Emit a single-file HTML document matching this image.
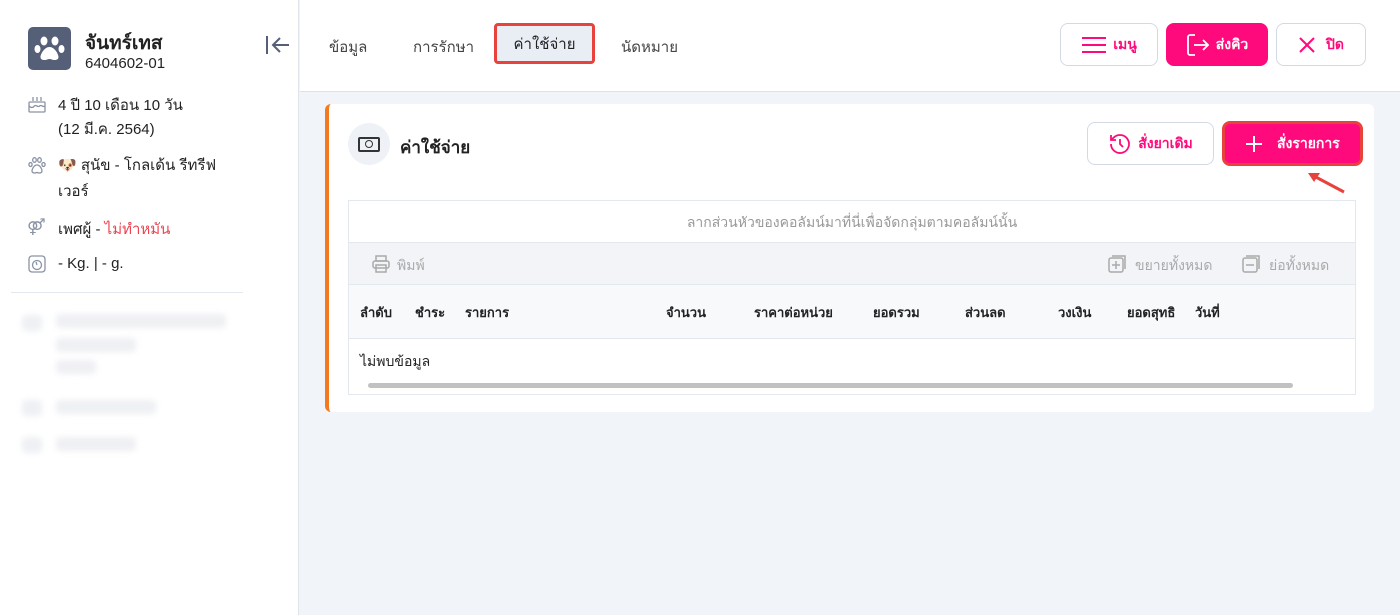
<!DOCTYPE html>
<html><head><meta charset="utf-8"><style>
*{box-sizing:border-box;margin:0;padding:0}
body{width:1400px;height:615px;font-family:"Liberation Sans","DejaVu Sans",sans-serif;background:#f1f4f8;position:relative;overflow:hidden;color:#222;font-size:14px}
.side{position:absolute;left:0;top:0;width:299px;height:615px;background:#fff;border-right:1px solid #dfe3ea}
.abs{position:absolute}
.top{position:absolute;left:300px;top:0;width:1100px;height:92px;background:#fff;border-bottom:1px solid #dde2ea}
.btn{position:absolute;border:1px solid #d3dae3;border-radius:8px;background:#fff;color:#ff0a7c;font-weight:bold;display:flex;align-items:center;justify-content:center;gap:6px;font-size:14px}
.pink{background:#ff0a7c;color:#fff;border-color:#ff0a7c}
.blur{position:absolute;background:#eef0f3;border-radius:4px;filter:blur(3px)}
</style></head><body>
<div class="side">
  <div class="abs" style="left:28px;top:27px;width:43px;height:43px;background:#555f77;border-radius:5px">
    <svg width="43" height="43" viewBox="0 0 43 43"><g fill="#fff"><ellipse cx="16" cy="14" rx="3.5" ry="4.5"/><ellipse cx="27" cy="14" rx="3.5" ry="4.5"/><ellipse cx="9.5" cy="22" rx="3" ry="4"/><ellipse cx="33.5" cy="22" rx="3" ry="4"/><path d="M21.5 20c-5 0-9 7-9 10s3 3 4.5 3 3-1 4.5-1 3 1 4.5 1 4.5 0 4.5-3-4-10-9-10z"/></g></svg>
  </div>
  <div class="abs" style="left:85px;top:28px;font-size:19px;font-weight:bold">จันทร์เทส</div>
  <div class="abs" style="left:85px;top:55px;font-size:15px">6404602-01</div>
  <svg class="abs" style="left:264px;top:34px" width="26" height="22" viewBox="0 0 26 22"><g stroke="#555f77" stroke-width="2" fill="none"><line x1="3" y1="2" x2="3" y2="20"/><line x1="9" y1="11" x2="25" y2="11"/><path d="M16 4l-7 7 7 7"/></g></svg>
  <svg class="abs" style="left:27px;top:94px" width="20" height="20" viewBox="0 0 20 20"><g stroke="#8a93a5" stroke-width="1.3" fill="none"><rect x="2" y="8" width="16" height="10" rx="1"/><path d="M2 12c2 2 4 2 5.3 0s4 2 5.3 0 4 2 5.4 0"/><line x1="6" y1="3" x2="6" y2="7"/><line x1="10" y1="3" x2="10" y2="7"/><line x1="14" y1="3" x2="14" y2="7"/></g></svg>
  <div class="abs" style="left:58px;top:94px;font-size:15px;line-height:24px">4 ปี 10 เดือน 10 วัน<br>(12 มี.ค. 2564)</div>
  <svg class="abs" style="left:27px;top:155px" width="20" height="20" viewBox="0 0 20 20"><g stroke="#8a93a5" stroke-width="1.3" fill="none"><ellipse cx="7.5" cy="5" rx="1.8" ry="2.3"/><ellipse cx="12.5" cy="5" rx="1.8" ry="2.3"/><ellipse cx="3.5" cy="9.5" rx="1.6" ry="2"/><ellipse cx="16.5" cy="9.5" rx="1.6" ry="2"/><path d="M10 10c-3 0-5 4-5 6s2 2 3 2 1.5-.6 2-.6 1 .6 2 .6 3 0 3-2-2-6-5-6z"/></g></svg>
  <div class="abs" style="left:58px;top:153px;font-size:15px;line-height:26px">🐶 สุนัข - โกลเด้น รีทรีฟ<br>เวอร์</div>
  <div class="abs" style="left:27px;top:217px;color:#8a93a5;font-size:16px">⚤</div>
  <div class="abs" style="left:58px;top:217px;font-size:15px">เพศผู้ - <span style="color:#f0434f">ไม่ทำหมัน</span></div>
  <svg class="abs" style="left:27px;top:254px" width="20" height="20" viewBox="0 0 20 20"><g stroke="#8a93a5" stroke-width="1.3" fill="none"><rect x="2" y="2" width="16" height="16" rx="3"/><circle cx="10" cy="11" r="4.5"/><line x1="10" y1="11" x2="9" y2="8"/></g></svg>
  <div class="abs" style="left:58px;top:255px;font-size:15px">- Kg. | - g.</div>
  <div class="abs" style="left:11px;top:292px;width:232px;height:1px;background:#e3e7ee"></div>
  <div class="blur" style="left:22px;top:315px;width:20px;height:16px"></div>
  <div class="blur" style="left:56px;top:314px;width:170px;height:14px"></div>
  <div class="blur" style="left:56px;top:338px;width:80px;height:14px"></div>
  <div class="blur" style="left:56px;top:360px;width:40px;height:14px"></div>
  <div class="blur" style="left:22px;top:400px;width:20px;height:16px"></div>
  <div class="blur" style="left:56px;top:400px;width:100px;height:14px"></div>
  <div class="blur" style="left:22px;top:437px;width:20px;height:16px"></div>
  <div class="blur" style="left:56px;top:437px;width:80px;height:14px"></div>
</div>
<div class="top">
  <div class="abs" style="left:29px;top:35px;font-size:15px;color:#444">ข้อมูล</div>
  <div class="abs" style="left:113px;top:35px;font-size:15px;color:#444">การรักษา</div>
  <div class="abs" style="left:194px;top:23px;width:101px;height:41px;border:3px solid #e8423c;border-radius:4px;background:#e9eef5;display:flex;align-items:center;justify-content:center;font-size:15px;color:#222">ค่าใช้จ่าย</div>
  <div class="abs" style="left:321px;top:35px;font-size:15px;color:#444">นัดหมาย</div>
  <div class="btn" style="left:760px;top:23px;width:98px;height:43px"><svg width="26" height="20" viewBox="0 0 26 20"><g stroke="#ff0a7c" stroke-width="2"><line x1="1" y1="3" x2="25" y2="3"/><line x1="1" y1="10" x2="25" y2="10"/><line x1="1" y1="17" x2="25" y2="17"/></g></svg>เมนู</div>
  <div class="btn pink" style="left:866px;top:23px;width:102px;height:43px"><svg width="24" height="24" viewBox="0 0 24 24"><g stroke="#fff" stroke-width="1.8" fill="none"><path d="M9 2H4a2 2 0 0 0-2 2v16a2 2 0 0 0 2 2h5"/><line x1="8" y1="12" x2="22" y2="12"/><path d="M17 7l5 5-5 5"/></g></svg>ส่งคิว</div>
  <div class="btn" style="left:976px;top:23px;width:90px;height:43px"><svg width="18" height="18" viewBox="0 0 18 18"><g stroke="#ff0a7c" stroke-width="2"><line x1="2" y1="2" x2="16" y2="16"/><line x1="16" y1="2" x2="2" y2="16"/></g></svg>&nbsp;ปิด</div>
</div>
<div class="abs" style="left:325px;top:104px;width:1049px;height:308px;background:#fff;border-radius:6px;border-left:4px solid #f47a20">
  <div class="abs" style="left:19px;top:19px;width:42px;height:42px;border-radius:50%;background:#eef1f5;display:flex;align-items:center;justify-content:center"><div style="width:22px;height:15px;border:2px solid #333;border-radius:2px;display:flex;align-items:center;justify-content:center"><div style="width:8px;height:8px;border:1.5px solid #333;border-radius:50%"></div></div></div>
  <div class="abs" style="left:71px;top:30px;font-size:17px;font-weight:bold">ค่าใช้จ่าย</div>
  <div class="btn" style="left:758px;top:18px;width:127px;height:43px"><svg width="24" height="24" viewBox="0 0 24 24"><g stroke="#ff0a7c" stroke-width="1.8" fill="none"><path d="M3 12a9 9 0 1 0 3-6.7L3 8"/><path d="M3 3v5h5"/><path d="M12 7v5l3 3"/></g></svg>สั่งยาเดิม</div>
  <div class="btn pink" style="left:893px;top:17px;width:141px;height:45px;border:3px solid #e8423c"><svg width="18" height="18" viewBox="0 0 18 18"><g stroke="#fff" stroke-width="2"><line x1="9" y1="1" x2="9" y2="17"/><line x1="1" y1="9" x2="17" y2="9"/></g></svg>&nbsp;&nbsp;สั่งรายการ</div>
  <svg class="abs" style="left:975px;top:63px" width="45" height="30"><line x1="40" y1="25" x2="8" y2="8" stroke="#e8423c" stroke-width="3"/><path d="M4 6 L16 6 L10 15 Z" fill="#e8423c"/></svg>
  <div class="abs" style="left:19px;top:96px;width:1008px;height:195px;border:1px solid #e3e7ee">
    <div style="height:42px;border-bottom:1px solid #e3e7ee;text-align:center;line-height:42px;color:#999;font-size:14px">ลากส่วนหัวของคอลัมน์มาที่นี่เพื่อจัดกลุ่มตามคอลัมน์นั้น</div>
    <div style="height:42px;background:#f2f4f7;border-bottom:1px solid #e3e7ee;position:relative;color:#aaa;font-size:14px">
      <svg class="abs" style="left:22px;top:11px" width="20" height="20" viewBox="0 0 20 20"><g stroke="#aaa" stroke-width="1.5" fill="none"><rect x="5" y="2" width="10" height="5"/><rect x="2" y="7" width="16" height="7" rx="2"/><rect x="5" y="11" width="10" height="7"/></g></svg>
      <span class="abs" style="left:48px;top:12px">พิมพ์</span>
      <svg class="abs" style="left:758px;top:11px" width="20" height="20" viewBox="0 0 20 20"><g stroke="#aaa" stroke-width="1.5" fill="none"><rect x="2" y="4" width="14" height="14" rx="2"/><path d="M5 2h13v13"/><line x1="9" y1="7" x2="9" y2="15"/><line x1="5" y1="11" x2="13" y2="11"/></g></svg>
      <span class="abs" style="left:786px;top:12px">ขยายทั้งหมด</span>
      <svg class="abs" style="left:892px;top:11px" width="20" height="20" viewBox="0 0 20 20"><g stroke="#aaa" stroke-width="1.5" fill="none"><rect x="2" y="4" width="14" height="14" rx="2"/><path d="M5 2h13v13"/><line x1="5" y1="11" x2="13" y2="11"/></g></svg>
      <span class="abs" style="left:920px;top:12px">ย่อทั้งหมด</span>
    </div>
    <div style="height:54px;background:#f8f9fb;border-bottom:1px solid #e3e7ee;position:relative;font-weight:bold;font-size:13px">
      <span class="abs" style="left:11px;top:17px">ลำดับ</span><span class="abs" style="left:66px;top:17px">ชำระ</span><span class="abs" style="left:116px;top:17px">รายการ</span><span class="abs" style="left:317px;top:17px">จำนวน</span><span class="abs" style="left:405px;top:17px">ราคาต่อหน่วย</span><span class="abs" style="left:524px;top:17px">ยอดรวม</span><span class="abs" style="left:616px;top:17px">ส่วนลด</span><span class="abs" style="left:709px;top:17px">วงเงิน</span><span class="abs" style="left:778px;top:17px">ยอดสุทธิ</span><span class="abs" style="left:846px;top:17px">วันที่</span>
    </div>
    <div style="position:relative;height:50px"><span class="abs" style="left:11px;top:12px;font-size:14px">ไม่พบข้อมูล</span>
    <div class="abs" style="left:19px;top:44px;width:925px;height:5px;border-radius:3px;background:#c1c1c1"></div></div>
  </div>
</div>
</body></html>
